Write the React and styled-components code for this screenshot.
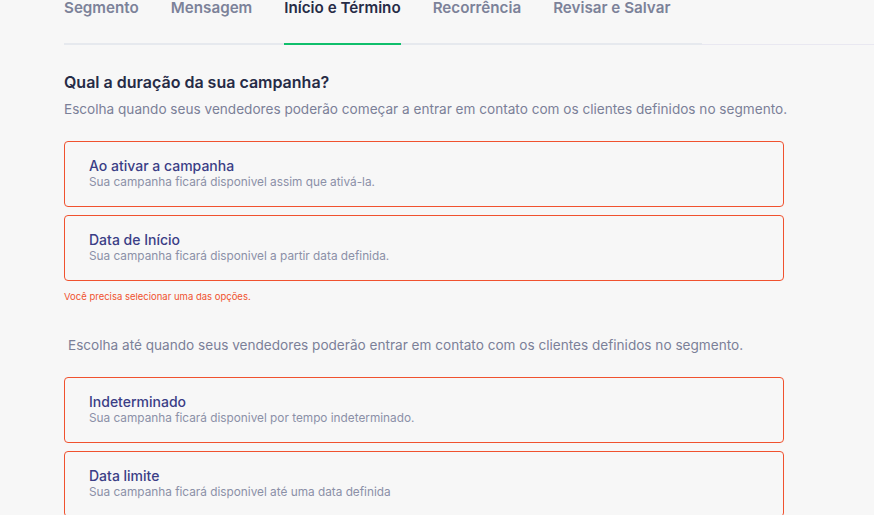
import React from "react";
import styled, { createGlobalStyle } from "styled-components";

const GlobalStyle = createGlobalStyle`
  html, body {
    margin: 0;
    padding: 0;
    background: #f7f7f7;
    font-family: "Inter", "Noto Sans", sans-serif;
  }
`;

const tabs = [
  "Segmento",
  "Mensagem",
  "Início e Término",
  "Recorrência",
  "Revisar e Salvar",
];

const startOptions = [
  {
    title: "Ao ativar a campanha",
    text: "Sua campanha ficará disponivel assim que ativá-la.",
  },
  {
    title: "Data de Início",
    text: "Sua campanha ficará disponivel a partir data definida.",
  },
];

const endOptions = [
  {
    title: "Indeterminado",
    text: "Sua campanha ficará disponivel por tempo indeterminado.",
  },
  {
    title: "Data limite",
    text: "Sua campanha ficará disponivel até uma data definida",
  },
];

const OptionCard = ({ title, text }) => (
  <Card>
    <CardTitle>{title}</CardTitle>
    <CardText>{text}</CardText>
  </Card>
);

const App = () => {
  const active = 2;
  return (
    <>
      <GlobalStyle />
      <Page>
        <TabBar>
          <TabList>
            {tabs.map((t, i) => (
              <Tab key={t} $active={i === active}>
                {t}
              </Tab>
            ))}
          </TabList>
          <TabFiller />
        </TabBar>

        <Content>
          <Heading>Qual a duração da sua campanha?</Heading>
          <Description>
            Escolha quando seus vendedores poderão começar a entrar em contato
            com os clientes definidos no segmento.
          </Description>
          <OptionList>
            {startOptions.map((o) => (
              <OptionCard key={o.title} {...o} />
            ))}
          </OptionList>
          <ErrorText>Você precisa selecionar uma das opções.</ErrorText>

          <Description $indent $spaced>
            Escolha até quando seus vendedores poderão entrar em contato com os
            clientes definidos no segmento.
          </Description>
          <OptionList>
            {endOptions.map((o) => (
              <OptionCard key={o.title} {...o} />
            ))}
          </OptionList>
        </Content>
      </Page>
    </>
  );
};

const Page = styled.div`
  width: 100%;
  height: 515px;
  overflow: hidden;
  padding-left: 64px;
  box-sizing: border-box;
`;

const TabBar = styled.div`
  display: flex;
  align-items: flex-end;
`;

const TabList = styled.div`
  display: flex;
  gap: 32px;
  width: 638px;
  border-bottom: 2px solid #e6e9ee;
`;

const TabFiller = styled.div`
  flex: 1;
  border-bottom: 1px solid #e9e8f1;
`;

const Tab = styled.div`
  padding-bottom: 27px;
  font-size: 15.2px;
  line-height: 16px;
  font-weight: 600;
  white-space: nowrap;
  color: ${(p) => (p.$active ? "#262b46" : "#7c8299")};
  border-bottom: 2px solid ${(p) => (p.$active ? "#10bf6c" : "transparent")};
  margin-bottom: -2px;
`;

const Content = styled.div`
  width: 720px;
  padding-top: 27px;
`;

const Heading = styled.h2`
  margin: 0;
  font-size: 16px;
  line-height: 20px;
  font-weight: 600;
  color: #262b46;
`;

const Description = styled.p`
  margin: ${(p) => (p.$spaced ? "32px" : "7px")} 0 22px;
  padding-left: ${(p) => (p.$indent ? "4px" : "0")};
  font-size: 13.6px;
  line-height: 20px;
  color: #7b8098;
  white-space: nowrap;
`;

const OptionList = styled.div`
  display: flex;
  flex-direction: column;
  gap: 8px;
`;

const Card = styled.div`
  border: 1px solid #f0522f;
  border-radius: 4px;
  padding: 16px 24px;
  cursor: pointer;
`;

const CardTitle = styled.div`
  font-size: 14px;
  line-height: 16px;
  font-weight: 500;
  color: #3b3e86;
`;

const CardText = styled.div`
  font-size: 11.8px;
  line-height: 16px;
  color: #8b90a7;
`;

const ErrorText = styled.div`
  margin-top: 10px;
  font-size: 9.5px;
  line-height: 12px;
  color: #f0522f;
`;

export default App;
